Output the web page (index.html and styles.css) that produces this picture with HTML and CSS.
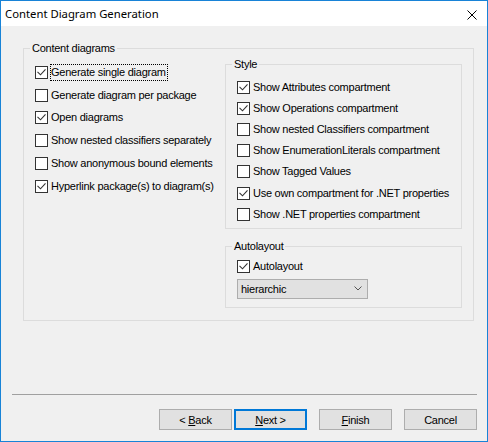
FILE: index.html
```html
<!DOCTYPE html>
<html>
<head>
<meta charset="utf-8">
<link rel="stylesheet" href="styles.css">
</head>
<body>
<div class="window">
  <div class="titlebar">
    <span class="title">Content Diagram Generation</span>
    <svg class="close" width="10" height="10" viewBox="0 0 10 10"><path d="M0.5 0.5L9.5 9.5M9.5 0.5L0.5 9.5" stroke="#000" stroke-width="1" fill="none"/></svg>
  </div>
  <div class="client">
    <fieldset class="group outer">
      <legend>Content diagrams</legend>
      <div class="cols">
        <div class="col-left">
          <div class="row"><span class="cb"><svg width="11" height="11" viewBox="0 0 11 11"><polyline points="1.5,4.8 4.5,7.8 9.5,2.3" fill="none" stroke="#333" stroke-width="1.1"/></svg></span><span class="lbl focus">Generate single diagram</span></div>
          <div class="row"><span class="cb"></span><span class="lbl">Generate diagram per package</span></div>
          <div class="row"><span class="cb"><svg width="11" height="11" viewBox="0 0 11 11"><polyline points="1.5,4.8 4.5,7.8 9.5,2.3" fill="none" stroke="#333" stroke-width="1.1"/></svg></span><span class="lbl">Open diagrams</span></div>
          <div class="row"><span class="cb"></span><span class="lbl">Show nested classifiers separately</span></div>
          <div class="row"><span class="cb"></span><span class="lbl">Show anonymous bound elements</span></div>
          <div class="row"><span class="cb"><svg width="11" height="11" viewBox="0 0 11 11"><polyline points="1.5,4.8 4.5,7.8 9.5,2.3" fill="none" stroke="#333" stroke-width="1.1"/></svg></span><span class="lbl">Hyperlink package(s) to diagram(s)</span></div>
        </div>
        <div class="col-right">
          <fieldset class="group style">
            <legend>Style</legend>
            <div class="row small"><span class="cb"><svg width="11" height="11" viewBox="0 0 11 11"><polyline points="1.5,4.8 4.5,7.8 9.5,2.3" fill="none" stroke="#333" stroke-width="1.1"/></svg></span><span class="lbl">Show Attributes compartment</span></div>
            <div class="row small"><span class="cb"><svg width="11" height="11" viewBox="0 0 11 11"><polyline points="1.5,4.8 4.5,7.8 9.5,2.3" fill="none" stroke="#333" stroke-width="1.1"/></svg></span><span class="lbl">Show Operations compartment</span></div>
            <div class="row small"><span class="cb"></span><span class="lbl">Show nested Classifiers compartment</span></div>
            <div class="row small"><span class="cb"></span><span class="lbl">Show EnumerationLiterals compartment</span></div>
            <div class="row small"><span class="cb"></span><span class="lbl">Show Tagged Values</span></div>
            <div class="row small"><span class="cb"><svg width="11" height="11" viewBox="0 0 11 11"><polyline points="1.5,4.8 4.5,7.8 9.5,2.3" fill="none" stroke="#333" stroke-width="1.1"/></svg></span><span class="lbl">Use own compartment for .NET properties</span></div>
            <div class="row small"><span class="cb"></span><span class="lbl">Show .NET properties compartment</span></div>
          </fieldset>
          <fieldset class="group auto">
            <legend>Autolayout</legend>
            <div class="row small"><span class="cb"><svg width="11" height="11" viewBox="0 0 11 11"><polyline points="1.5,4.8 4.5,7.8 9.5,2.3" fill="none" stroke="#333" stroke-width="1.1"/></svg></span><span class="lbl">Autolayout</span></div>
            <div class="combo"><span>hierarchic</span><svg width="8" height="5" viewBox="0 0 8 5"><polyline points="0.5,0.5 4,4 7.5,0.5" fill="none" stroke="#555" stroke-width="1"/></svg></div>
          </fieldset>
        </div>
      </div>
    </fieldset>
    <div class="spacer"></div>
    <div class="separator"></div>
    <div class="buttons">
      <button class="btn">&lt; <u>B</u>ack</button>
      <button class="btn next"><u>N</u>ext &gt;</button>
      <button class="btn gap"><u>F</u>inish</button>
      <button class="btn gap">Cancel</button>
    </div>
  </div>
</div>
</body>
</html>
```
FILE: styles.css
```css
html, body {
  margin: 0;
  padding: 0;
  background: #f0f0f0;
}
body {
  font-family: "Liberation Sans", Arial, sans-serif;
  font-size: 11px;
  letter-spacing: -0.25px;
  color: #000;
}
.window {
  width: 488px;
  height: 442px;
  box-sizing: border-box;
  border: 1px solid #1883d7;
  display: flex;
  flex-direction: column;
  background: #f0f0f0;
}
.titlebar {
  height: 25px;
  flex: none;
  background: #fff;
  display: flex;
  align-items: center;
  justify-content: space-between;
  padding: 0 10px 0 4px;
}
.title {
  font-family: "Noto Sans", "Liberation Sans", sans-serif;
  font-size: 11.3px;
  letter-spacing: 0;
  line-height: 16px;
  padding-top: 1px;
}
.close {
  display: block;
  margin-top: 2px;
}
.client {
  flex: 1;
  display: flex;
  flex-direction: column;
}
fieldset.group {
  border: 1px solid #dcdcdc;
  margin: 0;
  padding: 0;
  min-width: 0;
}
fieldset.group legend {
  margin-left: -5px;
  padding: 0 2px;
  line-height: 13px;
  height: 13px;
}
fieldset.group.outer {
  margin: 16px 13px 0 22px;
  padding: 3px 11px 12px 11px;
}
.cols {
  display: flex;
}
.col-left {
  width: 190px;
  padding-top: 3px;
}
.col-right {
  width: 237px;
  display: flex;
  flex-direction: column;
}
.row {
  display: flex;
  align-items: center;
  height: 22.8px;
}
.row.small {
  height: 21.1px;
}
.cb {
  width: 13px;
  height: 13px;
  box-sizing: border-box;
  border: 1px solid #333;
  background: #fff;
  flex: none;
}
.cb svg {
  display: block;
}
.lbl {
  margin-left: 3px;
  white-space: nowrap;
  line-height: 15px;
  height: 15px;
}
.focus {
  outline: 1px dotted #000;
  padding-right: 1px;
}
fieldset.group.style {
  padding: 6px 0 3px 11px;
}
fieldset.group.auto {
  margin-top: 11px;
  padding: 3px 0 8px 11px;
}
.combo {
  margin-top: 2px;
  width: 131px;
  height: 20px;
  box-sizing: border-box;
  border: 1px solid #adadad;
  background: #e1e1e1;
  display: flex;
  align-items: center;
  justify-content: space-between;
  padding: 0 5px 0 3px;
}
.combo svg {
  display: block;
}
.spacer {
  flex: 1;
}
.separator {
  height: 1px;
  background: #a0a0a0;
  margin: 0 10px 14px 11px;
}
.buttons {
  display: flex;
  justify-content: flex-end;
  margin: 0 10px 11px 0;
}
.btn {
  width: 73px;
  height: 21px;
  box-sizing: border-box;
  border: 1px solid #adadad;
  background: #e1e1e1;
  font-family: "Liberation Sans", Arial, sans-serif;
  font-size: 11px;
  letter-spacing: -0.25px;
  color: #000;
  padding: 0;
  margin: 0;
}
.btn.next {
  margin-left: 2px;
  border: 2px solid #0078d7;
}
.btn.gap {
  margin-left: 12px;
}
```
